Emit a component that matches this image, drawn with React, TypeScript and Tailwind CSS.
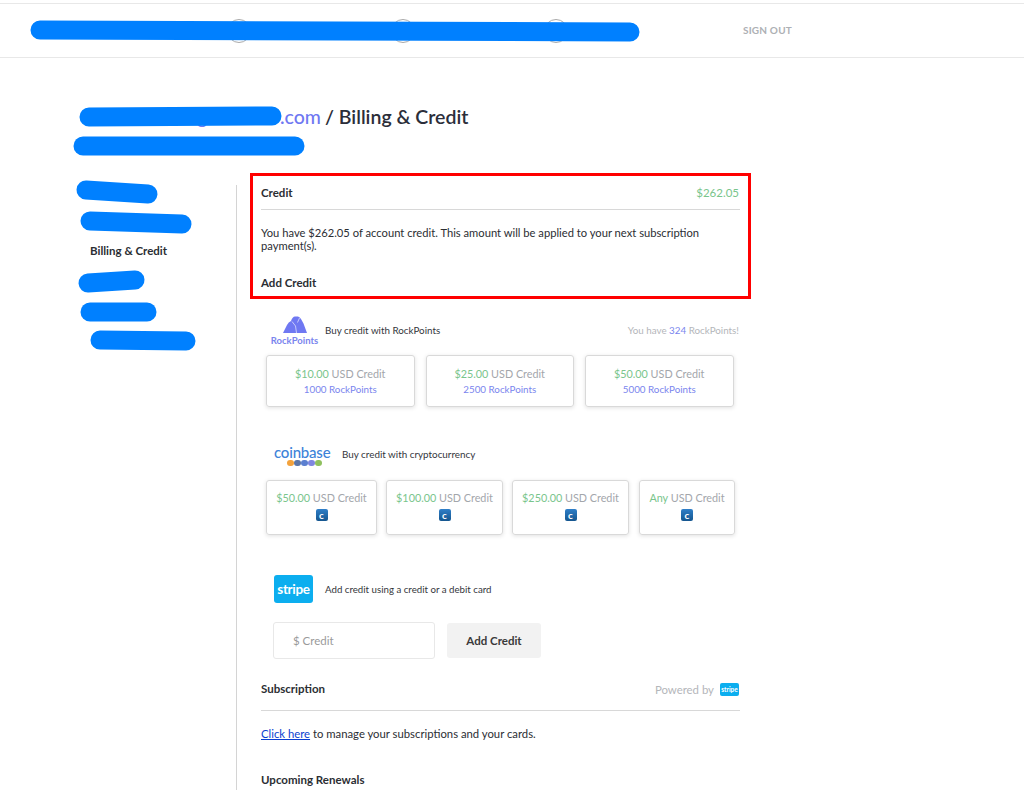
import React from "react";

function Coin() {
  return (
    <span className="mx-auto flex h-[12px] w-[12px] items-center justify-center rounded-[2px] bg-gradient-to-b from-[#2f7fc8] to-[#15568f] text-[10px] font-bold leading-none text-white">
      c
    </span>
  );
}

function RockCard({ price, points }: { price: string; points: string }) {
  return (
    <div className="flex h-[52px] w-[148.5px] flex-col items-center rounded-[3px] border border-[#d9d9d9] pt-[9px] shadow-[0_1px_4px_rgba(0,0,0,0.12)]">
      <div className="text-[10.8px] leading-[17px] text-[#a3a6ab]">
        <span className="text-[#79c58c]">{price}</span> USD Credit
      </div>
      <div className="text-[9.8px] leading-[15px] text-[#7a85ee]">{points}</div>
    </div>
  );
}

function CoinCard({ price, className }: { price: string; className: string }) {
  return (
    <div className={`h-[55px] rounded-[3px] border border-[#d9d9d9] pt-[8px] text-center shadow-[0_1px_4px_rgba(0,0,0,0.12)] ${className}`}>
      <div className="mb-[3px] text-[10.8px] leading-[17px] text-[#a3a6ab]">
        <span className="text-[#79c58c]">{price}</span> USD Credit
      </div>
      <Coin />
    </div>
  );
}

function Scribbles() {
  const strokes = [
    "M40 30 L630 32",
    "M89 117 L272 116",
    "M83 146 L295 146",
    "M86 190 L148 194",
    "M90 221 L182 224",
    "M88 283 L135 280",
    "M90 312 L147 312",
    "M100 340 L186 341",
  ];
  return (
    <svg className="pointer-events-none absolute left-0 top-0" width="1024" height="791" fill="none">
      {strokes.map((d) => (
        <path key={d} d={d} stroke="#0080ff" strokeWidth="19" strokeLinecap="round" />
      ))}
    </svg>
  );
}

export default function App() {
  return (
    <div className="relative h-[791px] w-full overflow-hidden bg-white font-['Lato','Liberation_Sans',sans-serif] text-[#2b2e33]">
      <header className="mt-[3px] flex h-[55px] items-center border-y border-[#e8e8e8] pl-[227px]">
        <span className="h-[24px] w-[24px] rounded-full border-[1.5px] border-[#aaaaaa]" />
        <span className="ml-[140px] h-[24px] w-[24px] rounded-full border-[1.5px] border-[#aaaaaa]" />
        <span className="ml-[129px] h-[24px] w-[24px] rounded-full border-[1.5px] border-[#aaaaaa]" />
        <span className="ml-[175px] text-[10px] font-bold tracking-[0.2px] text-[#adb0b4]">SIGN OUT</span>
      </header>

      <h1 className="mt-[46px] pl-[80px] text-[19.5px] font-semibold leading-[26px] text-[#2b2e3a]">
        <span className="font-medium text-[#6f78f2]">
          <span className="inline-block w-[117px]" />
          <span className="inline-block w-[11px]">g</span>
          <span className="inline-block w-[72px]" />
          .com
        </span>
        <span className="ml-[4px]">/ Billing &amp; Credit</span>
      </h1>

      <div className="mt-[55px] flex">
        <nav className="w-[236px] shrink-0 pl-[90px] pt-[51px] text-[11.5px] font-bold leading-[30px]">
          <div>Billing &amp; Credit</div>
        </nav>

        <main className="h-[605px] w-[504px] border-l border-[#d4d4d4] pl-[24px]">
          <section className="flex h-[25px] items-center justify-between border-b border-[#d8d8d8] pb-[8px] pr-px text-[11.5px] font-bold">
            <span>Credit</span>
            <span className="text-[11.5px] font-normal text-[#79c58c]">$262.05</span>
          </section>
          <p className="mt-[16px] text-[11.2px] leading-[13px]">
            You have $262.05 of account credit. This amount will be applied to your next subscription payment(s).
          </p>
          <div className="mt-[23px] text-[11.5px] font-bold leading-[16px]">Add Credit</div>

          <div className="mt-[23px] flex h-[32px] items-center pl-[3px] pr-px">
            <div className="flex w-[61px] flex-col items-center">
              <svg width="24" height="17" viewBox="0 0 24 17" className="mb-[2px] mt-[1px]">
                <path
                  d="M0 17 L4 9 Q5.5 6 8 5 Q9.5 0.5 12 0.5 L15 0.5 Q17 1 18 3 L20.5 7.5 L24 17 Z"
                  fill="#6f78f2"
                />
                <path d="M9 5.5 L12.5 10 L13.5 17 M16.5 2 L14.5 6.5" stroke="#fff" strokeWidth="0.6" fill="none" />
              </svg>
              <span className="text-[9.5px] font-bold leading-[11px] text-[#7a85ee]">RockPoints</span>
            </div>
            <span className="text-[9.8px] text-[#33363b]">Buy credit with RockPoints</span>
            <span className="ml-auto text-[9.8px] text-[#b4b6ba]">
              You have <span className="text-[#7a85ee]">324</span> RockPoints!
            </span>
          </div>

          <div className="ml-[5px] mt-[9px] flex gap-[11px]">
            <RockCard price="$10.00" points="1000 RockPoints" />
            <RockCard price="$25.00" points="2500 RockPoints" />
            <RockCard price="$50.00" points="5000 RockPoints" />
          </div>

          <div className="ml-[13px] mt-[37px] flex h-[23px] items-center">
            <div className="flex w-[68px] flex-col items-start">
              <span className="text-[15px] font-medium leading-[15px] tracking-[-0.2px] text-[#3d83d9]">coinbase</span>
              <span className="ml-[13px] flex gap-[0.5px]">
                <span className="h-[6.5px] w-[6.5px] rounded-full bg-[#f3a23c]" />
                <span className="h-[6.5px] w-[6.5px] rounded-full bg-[#5c76a8]" />
                <span className="h-[6.5px] w-[6.5px] rounded-full bg-[#5b7fd0]" />
                <span className="h-[6.5px] w-[6.5px] rounded-full bg-[#7f86e0]" />
                <span className="h-[6.5px] w-[6.5px] rounded-full bg-[#8fc05f]" />
              </span>
            </div>
            <span className="mb-[2px] text-[9.85px] text-[#33363b]">Buy credit with cryptocurrency</span>
          </div>

          <div className="ml-[5px] mt-[13px] flex gap-[9px]">
            <CoinCard price="$50.00" className="w-[111px]" />
            <CoinCard price="$100.00" className="w-[117px]" />
            <CoinCard price="$250.00" className="w-[117px]" />
            <div className="ml-px h-[55px] w-[96px] rounded-[3px] border border-[#d9d9d9] pt-[8px] text-center shadow-[0_1px_4px_rgba(0,0,0,0.12)]">
              <div className="mb-[3px] text-[10.8px] leading-[17px] text-[#a3a6ab]">
                <span className="text-[#79c58c]">Any</span> USD Credit
              </div>
              <Coin />
            </div>
          </div>

          <div className="ml-[13px] mt-[40px] flex h-[28px] items-center">
            <span className="flex h-[28px] w-[39px] items-center justify-center rounded-[3px] bg-[#0caeef] text-[13.5px] font-bold tracking-[-0.3px] text-white">
              stripe
            </span>
            <span className="ml-[12px] text-[9.7px] text-[#33363b]">Add credit using a credit or a debit card</span>
          </div>

          <div className="ml-[12px] mt-[19px] flex items-center gap-[12px]">
            <div className="flex h-[37px] w-[162px] items-center rounded-[3px] border border-[#e8e8e8] pl-[19px] text-[11.5px] text-[#9a9a9a]">
              $ Credit
            </div>
            <button className="h-[35px] w-[94px] rounded-[3px] bg-[#f2f2f2] text-[11.5px] font-bold text-[#3a3a3a]">
              Add Credit
            </button>
          </div>

          <section className="mt-[20px] flex h-[32px] items-start justify-between border-b border-[#d8d8d8] pr-px pt-px text-[11.5px] font-bold">
            <span>Subscription</span>
            <span className="mt-px flex items-center gap-[6px] text-[11.4px] font-normal text-[#b4b6ba]">
              Powered by
              <span className="flex h-[13px] w-[19px] items-center justify-center rounded-[2px] bg-[#0caeef] text-[6.5px] font-bold text-white">
                stripe
              </span>
            </span>
          </section>

          <p className="mt-[14px] text-[11.3px] leading-[17px]">
            <a className="text-[#0b3fd0] underline">Click here</a> to manage your subscriptions and your cards.
          </p>
          <div className="mt-[30px] text-[11.5px] font-bold leading-[16px]">Upcoming Renewals</div>
        </main>
      </div>

      <Scribbles />
      <div className="pointer-events-none absolute left-[250px] top-[173px] h-[126px] w-[501px] border-[3px] border-[#ff0000]" />
    </div>
  );
}
